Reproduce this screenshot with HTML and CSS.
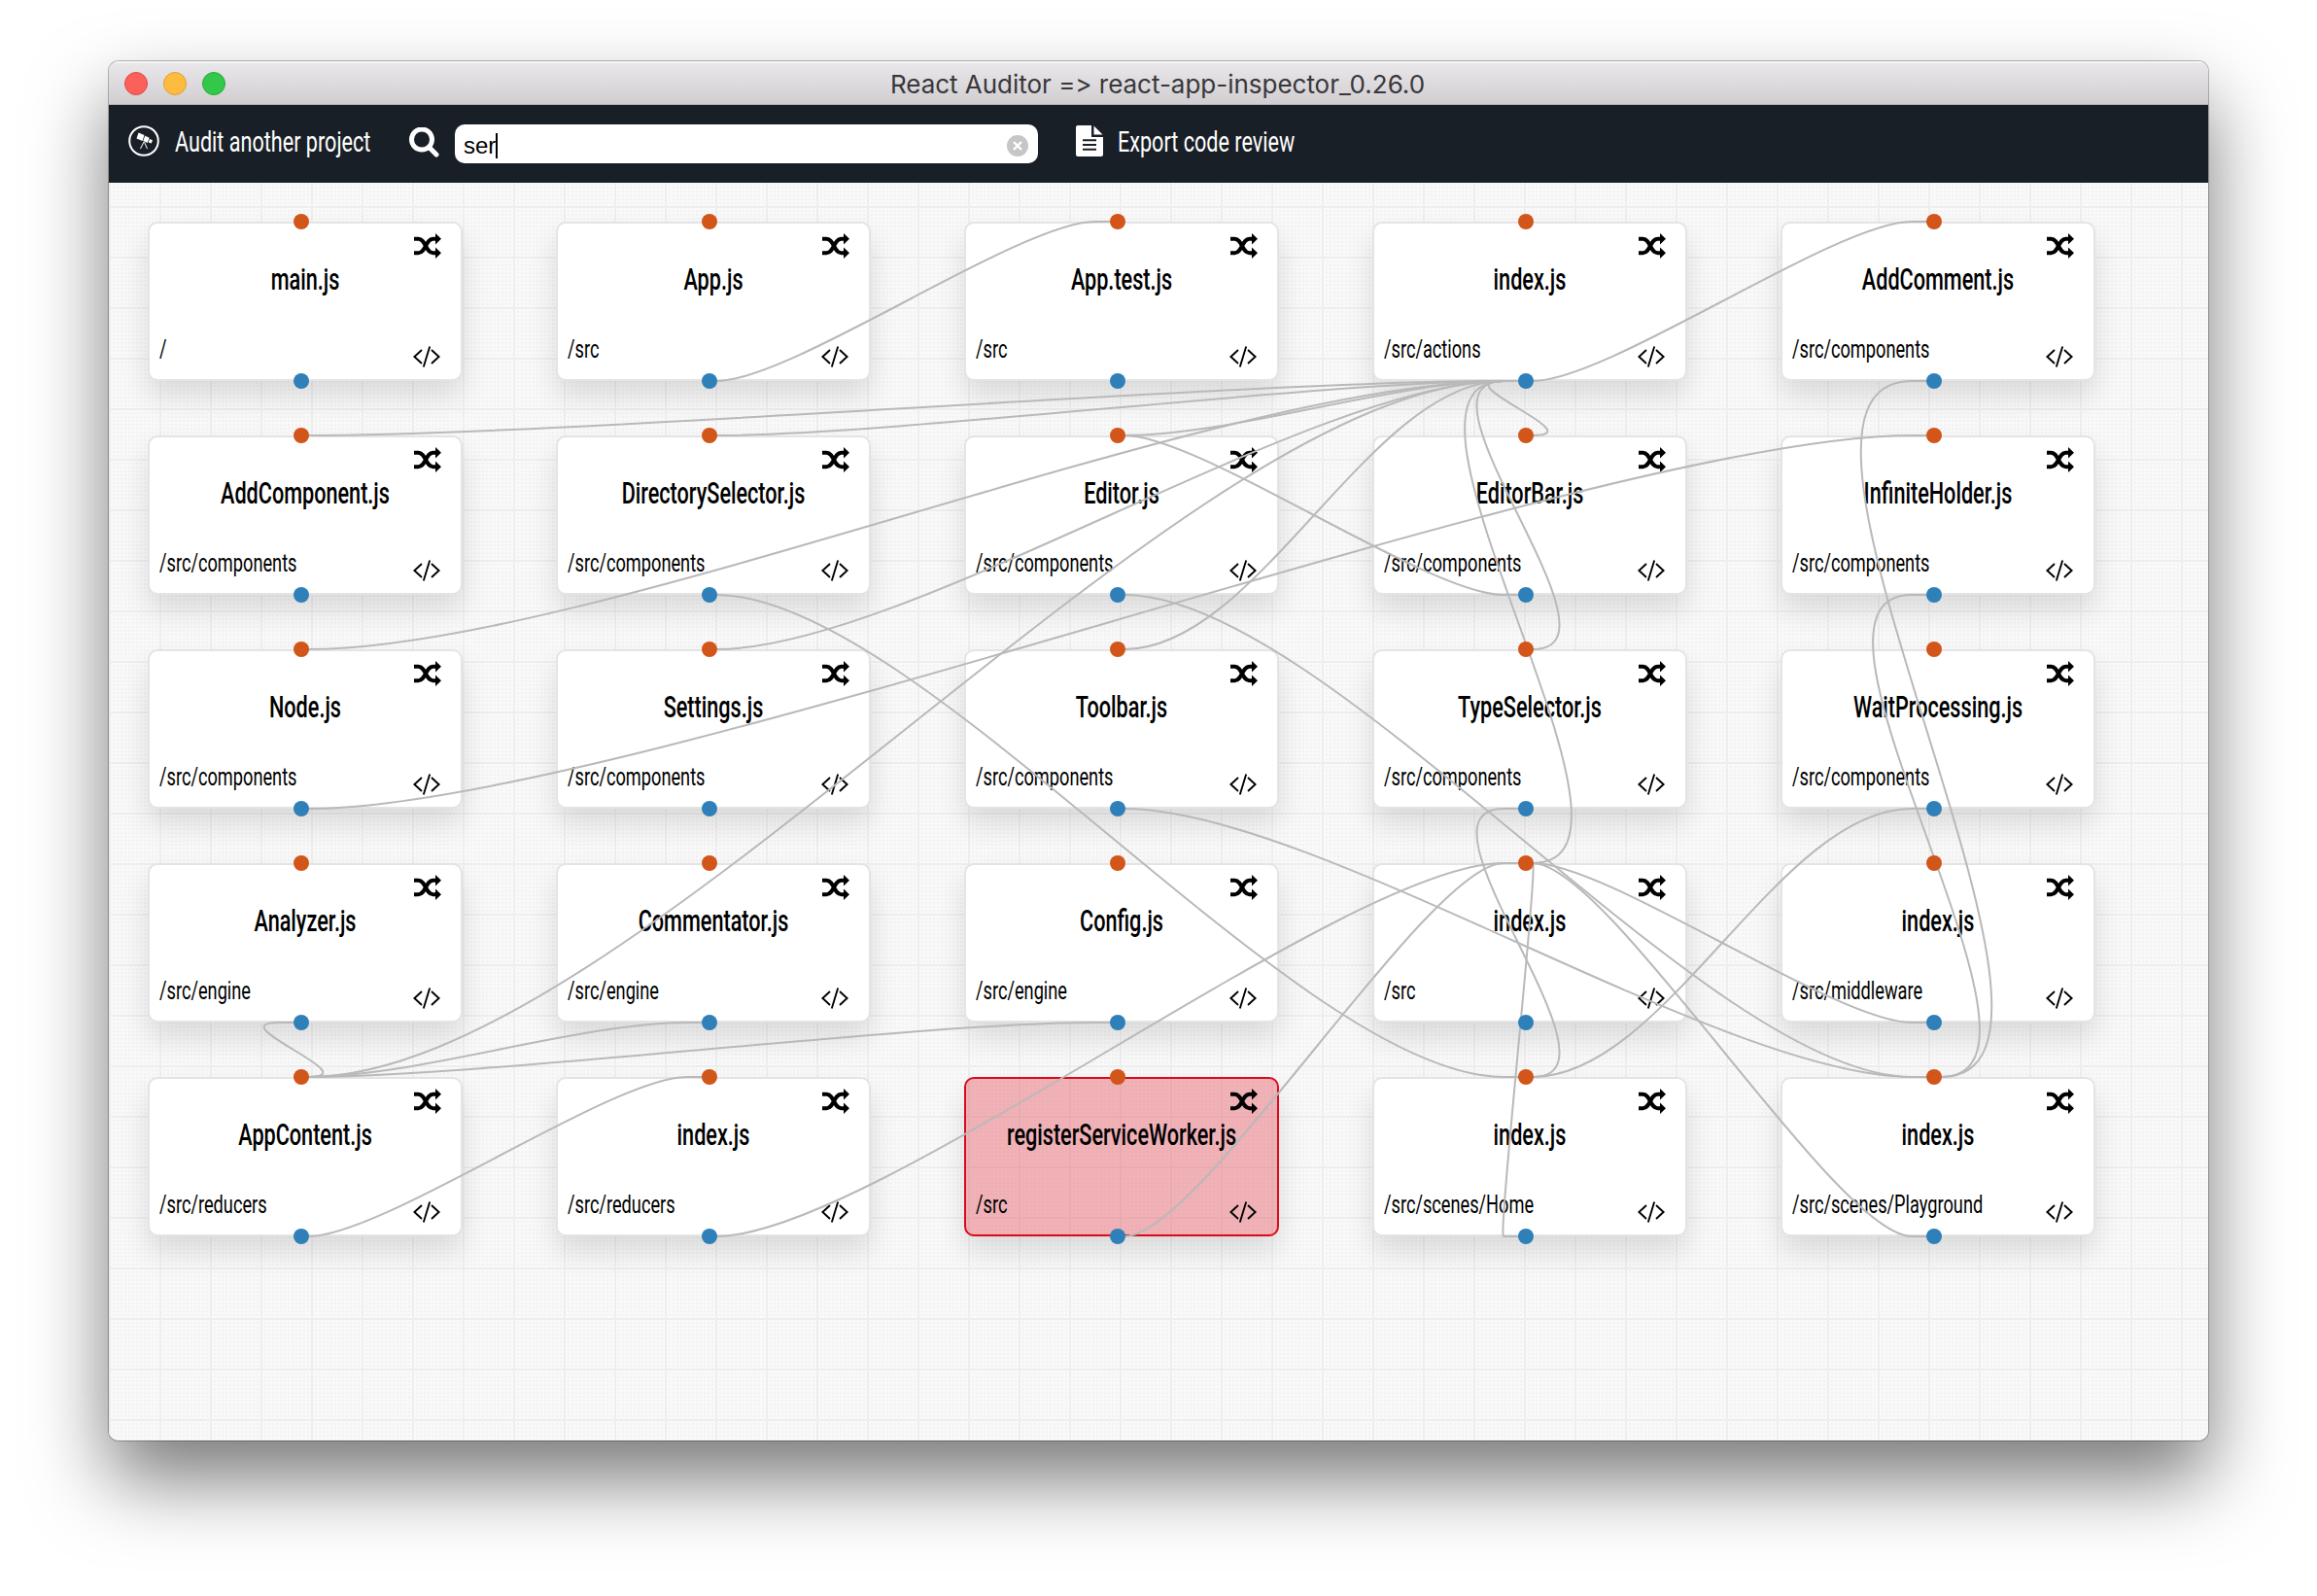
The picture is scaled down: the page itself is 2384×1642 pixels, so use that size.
FILE: index.html
```html
<!DOCTYPE html>
<html lang="en">
<head>
<meta charset="utf-8">
<title>React Auditor</title>
<link rel="stylesheet" href="styles.css">
</head>
<body>
<svg width="0" height="0" class="defs">
  <symbol id="i-random" viewBox="0 0 28 26"><path d="M0 5.8h4.5c7.500 0 7.500 14.400 15 14.400h4M0 20.200h4.500c7.500 0 7.500-14.400 15-14.400h4" fill="none" stroke="currentColor" stroke-width="4"/><path d="M22 0l6 5.800-6 5.700zM22 14.500l6 5.700-6 5.800z"/></symbol>
  <symbol id="i-code" viewBox="0 0 28 22"><path d="M9 4L1.400 11 9 18M19 4l7.600 7-7.600 7M17.200.5l-6.400 21" fill="none" stroke="currentColor" stroke-width="1.900"/></symbol>
</svg>
<div class="window">
  <header class="titlebar">
    <div class="lights"><i class="light red"></i><i class="light yellow"></i><i class="light green"></i></div>
    <span class="title">React Auditor =&gt; react-app-inspector_0.26.0</span>
  </header>
  <nav class="toolbar">
    <a class="action audit">
      <svg width="34" height="34" viewBox="0 0 34 34"><circle cx="17" cy="17" r="14.800" fill="none" stroke="#fff" stroke-width="2"/><path d="M11.500 8.500l6 2.500-2 6-6-2.500zM18.200 11.700l4.500 2-2 5.300-4.500-2zM23 15l3 1.200-1.300 3.400-3-1.200z" fill="#fff"/><path d="M17 18l-3.500 7M17.500 18l3 7" stroke="#fff" stroke-width="1"/></svg>
      <span class="label">Audit another project</span>
    </a>
    <div class="search">
      <svg width="32" height="32" viewBox="0 0 32 32"><circle cx="14" cy="12.500" r="10.500" fill="none" stroke="#fff" stroke-width="5"/><path d="M21.500 20.500l7.500 7.500" stroke="#fff" stroke-width="5" stroke-linecap="round"/></svg>
      <div class="field"><span class="query">ser</span><i class="caret"></i>
        <svg class="clear" width="22" height="22" viewBox="0 0 22 22"><circle cx="11" cy="11" r="11" fill="#c6c6c6"/><path d="M7 7l8 8M15 7l-8 8" stroke="#fff" stroke-width="2.400"/></svg>
      </div>
    </div>
    <a class="action export">
      <svg width="28" height="32" viewBox="0 0 28 32"><path d="M2 0h14v12h12v18a2 2 0 0 1-2 2H2a2 2 0 0 1-2-2V2a2 2 0 0 1 2-2z" fill="#fff"/><path d="M18.500.500v9h9z" fill="#fff"/><path d="M7 15.200h14M7 20h14M7 24.800h14" stroke="#191f26" stroke-width="2"/></svg>
      <span class="label">Export code review</span>
    </a>
  </nav>
  <main class="canvas">
    <div class="nodes" id="nodes"></div>
    <svg class="edges" id="edges" width="2160" height="1294"></svg>
  </main>
</div>
<script src="graph.js"></script>
</body>
</html>
```
FILE: styles.css
```css
* { box-sizing: border-box; }
body { margin: 0; height: 1642px; padding: 63px 0 0 112px; background: #fff; font-family: Roboto, sans-serif; color: #000; overflow: hidden; }
.defs { position: absolute; }
.window { width: 2160px; height: 1419px; border-radius: 10px; overflow: hidden; display: flex; flex-direction: column; box-shadow: 0 0 0 1px rgba(0,0,0,.26), 0 40px 80px rgba(0,0,0,.53); }
.titlebar { height: 45px; flex: none; display: grid; grid-template-columns: 1fr auto 1fr; align-items: center; background: linear-gradient(#e9e7ea, #d0ced1); border-top: 2px solid #f5f4f5; border-bottom: 1px solid #b4b2b4; }
.lights { display: flex; gap: 16px; padding-left: 16px; }
.light { width: 24px; height: 24px; border-radius: 50%; border: 1px solid; }
.red { background: #fc605b; border-color: #df4744; }
.yellow { background: #fdbc40; border-color: #de9f34; }
.green { background: #34c84a; border-color: #27aa35; }
.title { grid-column: 2; padding: 2px 2px 0 0; font: 26px/38px Inter, sans-serif; font-feature-settings: "calt" 0; letter-spacing: -.02px; color: #39373a; white-space: nowrap; }
.toolbar { height: 80px; flex: none; display: flex; background: #191f26; color: #fff; padding: 20px 0 0 19px; }
.action { display: flex; height: 34px; align-items: center; }
.audit { width: 289px; gap: 15px; }
.audit svg { flex: none; margin-top: -1px; }
.label { font-size: 30px; line-height: 34px; padding-top: 1px; white-space: nowrap; transform: scaleX(.72); transform-origin: left; }
.search { display: flex; width: 687px; gap: 16px; }
.search > svg { margin-top: 3px; }
.field { width: 600px; height: 40px; border-radius: 10px; background: #fff; color: #000; display: flex; align-items: center; padding: 3px 10px 0 9px; }
.query { font: 24px "Liberation Sans", sans-serif; padding-top: 1px; }
.caret { width: 2px; height: 26px; background: #000; }
.clear { margin-left: auto; }
.export { gap: 15px; }
.canvas { position: relative; flex: 1; background-color: #f9f9f9; background-image: linear-gradient(90deg, #eee 2px, transparent 2px), linear-gradient(#eee 2px, transparent 2px), conic-gradient(from 270deg at 2px 2px, #f2f2f2 90deg, transparent 0); background-size: 52px 52px, 52px 52px, 4px 4px; background-position: 0 24px; }
.nodes { display: grid; grid-template-columns: repeat(5, 324px); grid-auto-rows: 164px; gap: 56px 96px; padding: 40px; }
.node { position: relative; border: 2px solid #e4e4e4; border-radius: 10px; background: #fff; background-clip: padding-box; box-shadow: 0 16px 30px rgba(0,0,0,.12); }
.node.match { border-color: #d90c1c; background: rgba(226,60,76,.38); }
.name { position: absolute; top: 38px; left: -40px; right: -40px; text-align: center; font-size: 31px; line-height: 40px; font-weight: 500; white-space: nowrap; transform: scaleX(.698); }
.path { position: absolute; left: 10px; top: 112px; font-size: 26px; line-height: 34px; white-space: nowrap; transform: scaleX(.7); transform-origin: left; }
.random { position: absolute; left: 272px; top: 10px; }
.code { position: absolute; left: 271px; top: 126px; }
.edges { position: absolute; left: 0; top: 0; }
.edges path { fill: none; stroke: #b9b9b9; stroke-width: 2; }
.in { fill: #d25519; }
.out { fill: #2f80b9; }
```
FILE: graph.js
```javascript
const files = [
  ['main.js', '/'], ['App.js', '/src'], ['App.test.js', '/src'], ['index.js', '/src/actions'], ['AddComment.js', '/src/components'],
  ['AddComponent.js', '/src/components'], ['DirectorySelector.js', '/src/components'], ['Editor.js', '/src/components'], ['EditorBar.js', '/src/components'], ['InfiniteHolder.js', '/src/components'],
  ['Node.js', '/src/components'], ['Settings.js', '/src/components'], ['Toolbar.js', '/src/components'], ['TypeSelector.js', '/src/components'], ['WaitProcessing.js', '/src/components'],
  ['Analyzer.js', '/src/engine'], ['Commentator.js', '/src/engine'], ['Config.js', '/src/engine'], ['index.js', '/src'], ['index.js', '/src/middleware'],
  ['AppContent.js', '/src/reducers'], ['index.js', '/src/reducers'], ['registerServiceWorker.js', '/src'], ['index.js', '/src/scenes/Home'], ['index.js', '/src/scenes/Playground']
];
// [file, file that imports it]
const links = [
  [1, 2], [3, 4], [3, 5], [3, 6], [3, 7], [3, 8], [3, 10], [3, 11], [3, 12], [3, 13], [3, 18], [3, 20],
  [10, 9], [8, 7], [6, 23], [7, 24], [9, 24], [4, 24], [12, 24], [13, 23], [14, 23],
  [15, 20], [16, 20], [17, 20], [20, 21], [21, 18], [22, 18], [23, 18], [24, 18], [19, 18]
];
const term = 'ser';

document.getElementById('nodes').innerHTML = files.map(([name, path]) => `
  <div class="node${name.toLowerCase().includes(term) ? ' match' : ''}">
    <span class="name">${name}</span><span class="path">${path}</span>
    <svg class="random" width="28" height="26"><use href="#i-random"/></svg>
    <svg class="code" width="28" height="22"><use href="#i-code"/></svg>
  </div>`).join('');

const portX = i => 198 + 420 * (i % 5);
const rowY = i => 40 + 220 * Math.floor(i / 5);

function bend(dx, dy) {
  const base = 0.2 * dx;
  if (dy < 0) return base;
  const falloff = dx < 100 ? 0.98 : dx < 500 ? 0.58 : dx < 1000 ? 0.33 : 0.44;
  return base + (47 + 0.2 * dy) * falloff;
}

function link([from, to]) {
  const y1 = rowY(from) + 164, y2 = rowY(to);
  const s = portX(from) < portX(to) ? 1 : -1;
  const x1 = portX(from) + (s > 0 ? 7 : -23);
  const x2 = portX(to) + (s > 0 ? -23 : 7);
  const d = s * bend(Math.abs(x2 - x1), y2 - y1);
  return `<path d="M${portX(from)} ${y1}H${x1}C${x1 + d} ${y1} ${x2 - d} ${y2} ${x2} ${y2}H${portX(to)}"/>`;
}

document.getElementById('edges').innerHTML = links.map(link).join('') +
  files.map((f, i) => `<circle class="in" cx="${portX(i)}" cy="${rowY(i)}" r="8"/><circle class="out" cx="${portX(i)}" cy="${rowY(i) + 164}" r="8"/>`).join('');
```
